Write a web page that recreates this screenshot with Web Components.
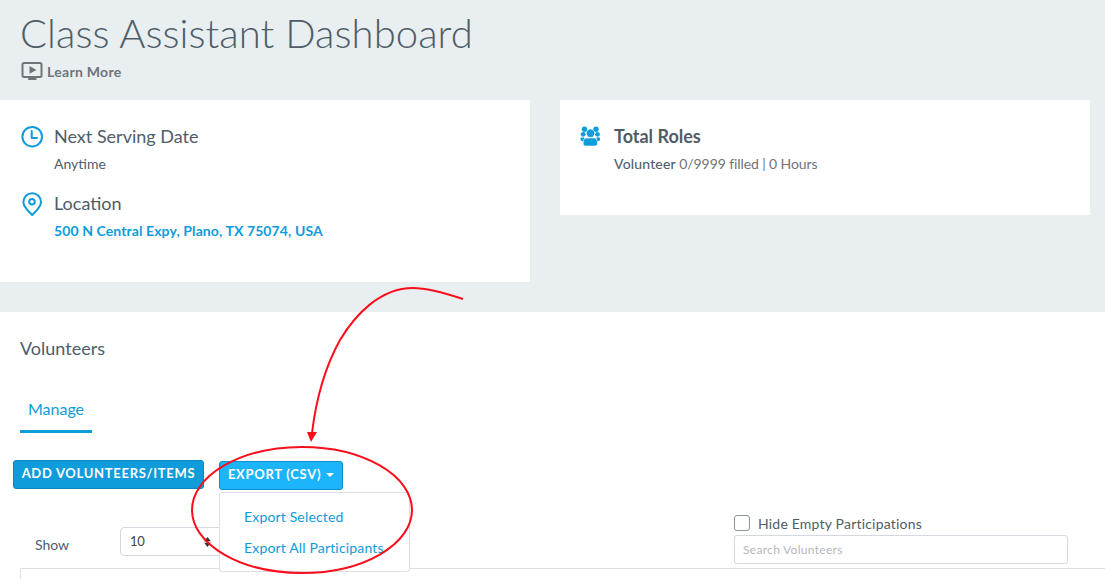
<!DOCTYPE html>
<html>
<head>
<meta charset="utf-8">
<title>Class Assistant Dashboard</title>
<style>
  html, body { margin: 0; height: 579px; overflow: hidden; }
  body { background-color: #e9eef1; font-family: Lato, "Liberation Sans", sans-serif; color: #4e5d68; position: relative; }
</style>
</head>
<body>
<page-header title="Class Assistant Dashboard"></page-header>
<div id="cards" style="display:flex;align-items:flex-start;gap:30px;padding-right:15px;height:212px">
  <info-card style="height:182px">
    <info-row icon="clock" heading="Next Serving Date"><span>Anytime</span></info-row>
    <info-row icon="pin" heading="Location"><span style="color:#0e9cdb;font-weight:700;letter-spacing:.1px">500 N Central Expy, Plano, TX 75074, USA</span></info-row>
  </info-card>
  <info-card style="height:115px">
    <info-row icon="users" heading="Total Roles" strong><span style="color:#4e5d68;letter-spacing:.2px;-webkit-text-stroke:.1px #4e5d68">Volunteer</span> 0/9999 filled | 0 Hours</info-row>
  </info-card>
</div>
<volunteers-panel></volunteers-panel>
<export-note></export-note>

<script>
const icons = {
  clock: `<svg width="24" height="24" viewBox="0 0 24 24" fill="none" stroke="#0e9cdb" stroke-width="2"><circle cx="12.200" cy="12.700" r="9.800"/><path d="M11.700 7V14H17" stroke-linecap="round" stroke-linejoin="round"/></svg>`,
  pin: `<svg width="24" height="26" viewBox="0 0 24 26" fill="none" stroke="#0e9cdb" stroke-width="2"><path d="M12.200 25C9 21.500 3.400 17.500 3.400 12A8.800 8.800 0 0 1 21 12C21 17.500 15.400 21.500 12.200 25Z" stroke-linejoin="round"/><circle cx="12" cy="11.700" r="2.800"/></svg>`,
  users: `<svg width="21" height="20" viewBox="0 0 20 20" fill="#0e9cdb"><circle cx="4" cy="3.300" r="2.700"/><circle cx="15.500" cy="3.300" r="2.700"/><circle cx="2.700" cy="8.300" r="2.400"/><circle cx="17" cy="8.300" r="2.400"/><path d="M0.300 11.500H3.800L3 15.500C1 15.300 0 14.300 0 13Z"/><path d="M19.300 11.500H15.800L16.600 15.500C18.600 15.300 19.600 14.300 19.600 13Z"/><path d="M5.500 12H14C16 12 17 14.500 17 17.500C17 19 16 20 14.500 20H5C3.500 20 2.700 19 2.700 17.500C2.700 14.500 3.500 12 5.500 12Z" stroke="#fff" stroke-width=".6"/><circle cx="10" cy="7.300" r="4.200" stroke="#fff" stroke-width=".6"/></svg>`
};

class PageHeader extends HTMLElement {
  connectedCallback() {
    this.attachShadow({ mode: "open" }).innerHTML = `
      <style>
        :host { display: block; height: 100px; box-sizing: border-box; padding: 8px 20px 0; }
        h1 { margin: 0; font-size: 40px; line-height: 50px; font-weight: 300; color: #4e5d68; letter-spacing: 0.06px; }
        a { display: flex; align-items: center; gap: 4px; font-size: 14px; letter-spacing: .3px; font-weight: 700; color: #6e7479; height: 22px; margin-top: 2px; }
      </style>
      <h1>${this.getAttribute("title")}</h1>
      <a>
        <svg width="23" height="18" viewBox="0 0 22 18"><rect x="2" y="1" width="19" height="14" rx="1.500" fill="none" stroke="#6e7479" stroke-width="2"/><path d="M9 4L16 8L9 11.700Z" fill="#6e7479"/><rect x="7.700" y="16" width="8.300" height="2" fill="#6e7479"/></svg>
        Learn More
      </a>
    `;
    this.removeAttribute("title");
  }
}

class InfoCard extends HTMLElement {
  constructor() {
    super();
    this.attachShadow({ mode: "open" }).innerHTML = `
      <style>
        :host { display: flex; flex-direction: column; gap: 17px; flex: 1; box-sizing: border-box; background: #fff; padding: 24px 20px 0; }
      </style>
      <slot></slot>
    `;
  }
}

class InfoRow extends HTMLElement {
  connectedCallback() {
    const strong = this.hasAttribute("strong");
    this.attachShadow({ mode: "open" }).innerHTML = `
      <style>
        :host { display: grid; grid-template-columns: 24px 1fr; column-gap: 10px; }
        .icon { height: 24px; display: flex; align-items: center; }
        h3 { margin: 0; font-size: 18px; line-height: 24px; font-weight: ${strong ? 700 : 400}; color: #4e5d68; }
        p { margin: 6px 0 0; font-size: 14px; line-height: 20px; letter-spacing: ${strong ? "-.1px" : "0"}; color: ${strong ? "#6e7479" : "#4e5d68"}; }
      </style>
      <div class="icon">${icons[this.getAttribute("icon")]}</div>
      <div>
        <h3>${this.getAttribute("heading")}</h3>
        <p><slot></slot></p>
      </div>
    `;
  }
}

class ExportMenu extends HTMLElement {
  constructor() {
    super();
    this.attachShadow({ mode: "open" }).innerHTML = `
      <style>
        :host { display: block; position: relative; }
        button { display: block; box-sizing: border-box; height: 29px; width: 124px; margin-top: 1px; padding: 0 0 3px; background: #1cb4fb; color: #fff; border: 1px solid #0e8fc9; border-radius: 3px; font: 700 13px Lato, sans-serif; letter-spacing: .7px; }
        button i { display: inline-block; border: 4px solid transparent; border-top-color: #fff; border-bottom: 0; margin-left: 1px; vertical-align: 2px; }
        ul { position: absolute; z-index: 2; left: 0; top: 32px; width: 191px; height: 80px; box-sizing: border-box; margin: 0; padding: 8px 0 0 24px; list-style: none; background: #fff; border: 1px solid #dbe0e4; border-radius: 3px; color: #0e9cdb; font-size: 14px; letter-spacing: .16px; line-height: 31px; }
      </style>
      <button>EXPORT (CSV) <i></i></button>
      <ul><li>Export Selected</li><li>Export All Participants</li></ul>
    `;
  }
}

class VolunteersPanel extends HTMLElement {
  constructor() {
    super();
    this.attachShadow({ mode: "open" }).innerHTML = `
      <style>
        :host { display: block; height: 267px; background: #fff; overflow: hidden; }
        h2 { margin: 0; padding: 24px 0 0 20px; font-size: 18px; line-height: 24px; font-weight: 400; color: #4e5d68; }
        .tab { display: inline-block; margin: 38px 0 0 20px; width: 72px; height: 35px; box-sizing: border-box; text-align: center; color: #0e9cdb; font-size: 16px; line-height: 21px; border-bottom: 3px solid #0e9cdb; }
        .actions { display: flex; gap: 15px; margin: 27px 0 0 13px; }
        .add { box-sizing: border-box; height: 29px; width: 191px; padding: 0 0 3px; background: #0e9cdb; color: #fff; border: 1px solid #0c86bd; border-radius: 3px; font: 700 13px Lato, sans-serif; letter-spacing: .7px; }
        .filters { display: flex; justify-content: space-between; margin: 25px 37px 0 35px; height: 53px; }
        .show { display: flex; align-items: flex-start; font-size: 14px; color: #4e5d68; }
        .show span { width: 85px; line-height: 36px; margin-top: 12px; }
        .select { box-sizing: border-box; position: relative; width: 110px; height: 29px; margin-top: 12px; padding-left: 9px; border: 1px solid #d3d9de; border-radius: 4px; font-size: 13px; letter-spacing: -.4px; line-height: 27px; color: #444; }
        .select svg { position: absolute; right: 18px; top: 9px; }
        .search { display: flex; flex-direction: column; width: 334px; }
        label { display: flex; align-items: center; gap: 8px; height: 16px; font-size: 14px; letter-spacing: .2px; color: #4e5d68; }
        label i { box-sizing: border-box; width: 16px; height: 16px; border: 1px solid #8b949b; border-radius: 3px; background: #fff; }
        .input { box-sizing: border-box; height: 29px; margin-top: 4px; padding-left: 8px; border: 1px solid #d3d9de; border-radius: 3px; font-size: 12px; letter-spacing: .3px; line-height: 27px; color: #b3b8bc; }
        .table { height: 12px; margin: 0 0 0 20px; border: 1px solid #dbe0e4; border-bottom: 0; border-right: 0; }
      </style>
      <h2>Volunteers</h2>
      <div class="tab">Manage</div>
      <div class="actions">
        <button class="add">ADD VOLUNTEERS/ITEMS</button>
        <export-menu></export-menu>
      </div>
      <div class="filters">
        <div class="show">
          <span>Show</span>
          <div class="select">10<svg width="7" height="10" viewBox="0 0 8 12" fill="#333"><path d="M4 0L8 5H0Z"/><path d="M4 12L8 7H0Z"/></svg></div>
        </div>
        <div class="search">
          <label><i></i>Hide Empty Participations</label>
          <div class="input">Search Volunteers</div>
        </div>
      </div>
      <div class="table"></div>
    `;
  }
}

// the red hand drawn marks lie over the whole page
class ExportNote extends HTMLElement {
  constructor() {
    super();
    this.attachShadow({ mode: "open" }).innerHTML = `
      <style>
        :host { display: block; position: absolute; z-index: 5; left: 0; top: 0; pointer-events: none; }
      </style>
      <svg width="1105" height="579" viewBox="0 0 1105 579" fill="none" stroke="#fb0d1b">
        <path d="M463 299C445 293 428 288 413 288C380 288 355 315 340 340C325 367 316 400 312 433" stroke-width="2"/>
        <path d="M307 432L317 432L311 442Z" fill="#fb0d1b" stroke="none"/>
        <ellipse cx="302" cy="510" rx="110" ry="63" stroke-width="2"/>
      </svg>
    `;
  }
}

customElements.define("page-header", PageHeader);
customElements.define("info-card", InfoCard);
customElements.define("info-row", InfoRow);
customElements.define("export-menu", ExportMenu);
customElements.define("volunteers-panel", VolunteersPanel);
customElements.define("export-note", ExportNote);
</script>
</body>
</html>
